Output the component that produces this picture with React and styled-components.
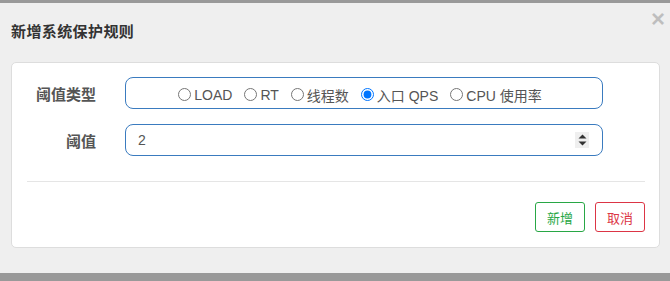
import styled, { createGlobalStyle } from "styled-components";
import { useState } from "react";

const GlobalStyle = createGlobalStyle`
  html, body {
    margin: 0;
    padding: 0;
    background: #999;
  }
  body {
    font-family: "Liberation Sans", "Noto Sans CJK SC", sans-serif;
  }
`;

const options = ["LOAD", "RT", "线程数", "入口 QPS", "CPU 使用率"];

export default function App() {
  const [mode, setMode] = useState("入口 QPS");
  const [count, setCount] = useState("2");

  return (
    <>
      <GlobalStyle />
      <Page>
        <Dialog>
          <Header>
            <Title>新增系统保护规则</Title>
            <Close>×</Close>
          </Header>
          <Card>
            <Row>
              <Label>阈值类型</Label>
              <RadioBox>
                {options.map((opt) => (
                  <RadioLabel key={opt}>
                    <Radio
                      type="radio"
                      name="mode"
                      checked={mode === opt}
                      onChange={() => setMode(opt)}
                    />
                    {opt}
                  </RadioLabel>
                ))}
              </RadioBox>
            </Row>
            <Row>
              <Label>阈值</Label>
              <NumberBox>
                <NumberInput
                  value={count}
                  onChange={(evt) => setCount(evt.target.value)}
                />
                <Spinner>
                  <svg width="9" height="12" viewBox="0 0 9 12">
                    <path d="M4.5 0.5 L8.5 4.5 L0.5 4.5 Z" fill="#333" />
                    <path d="M0.5 7.5 L8.5 7.5 L4.5 11.5 Z" fill="#333" />
                  </svg>
                </Spinner>
              </NumberBox>
            </Row>
            <Divider />
            <Footer>
              <Button $color="#28a745">新增</Button>
              <Button $color="#dc3545">取消</Button>
            </Footer>
          </Card>
        </Dialog>
      </Page>
    </>
  );
}

const Page = styled.div`
  width: 670px;
  height: 281px;
  padding: 3px 0 8px;
  box-sizing: border-box;
  background: #999;
`;

const Dialog = styled.div`
  position: relative;
  height: 270px;
  background: #efefef;
  padding: 0 10px 0 11px;
  box-sizing: border-box;
`;

const Header = styled.div`
  height: 59px;
  padding-top: 18px;
  box-sizing: border-box;
`;

const Title = styled.div`
  font-family: "Noto Sans CJK SC", sans-serif;
  font-size: 15px;
  font-weight: bold;
  letter-spacing: 0.4px;
  color: #333;
  line-height: 20px;
`;

const Close = styled.span`
  position: absolute;
  top: 4px;
  right: 5px;
  font-family: "Liberation Sans", sans-serif;
  font-size: 24px;
  font-weight: bold;
  line-height: 1;
  color: #000;
  opacity: 0.2;
`;

const Card = styled.div`
  background: #fff;
  border: 1px solid #ddd;
  border-radius: 5px;
  height: 186px;
  box-sizing: border-box;
  padding: 14px 14px 0 15px;
  display: flex;
  flex-direction: column;
  gap: 15px;
`;

const Row = styled.div`
  display: flex;
  align-items: center;
`;

const Label = styled.div`
  width: 69px;
  margin-right: 29px;
  text-align: right;
  font-family: "Noto Sans CJK SC", sans-serif;
  font-size: 15px;
  font-weight: bold;
  color: #555;
`;

const Field = styled.div`
  width: 478px;
  height: 32px;
  box-sizing: border-box;
  border: 1px solid #3a7bbf;
  border-radius: 8px;
  display: flex;
  align-items: center;
`;

const RadioBox = styled(Field)`
  justify-content: center;
  gap: 12px;
  padding: 3px 8px 0 0;
`;

const RadioLabel = styled.label`
  display: flex;
  align-items: center;
  font-size: 14px;
  color: #555;
`;

const Radio = styled.input`
  width: 13px;
  height: 13px;
  margin: 0 3px 0 0;
`;

const NumberBox = styled(Field)`
  padding: 0 13px 0 12px;
`;

const NumberInput = styled.input`
  flex: 1;
  border: none;
  outline: none;
  padding: 0;
  font-family: "Liberation Sans", sans-serif;
  font-size: 14px;
  color: #555;
  background: transparent;
`;

const Spinner = styled.span`
  width: 14px;
  height: 16px;
  background: #efefef;
  display: flex;
  align-items: center;
  justify-content: center;
`;

const Divider = styled.div`
  height: 1px;
  background: #e5e5e5;
  margin: 10px 0 5px;
`;

const Footer = styled.div`
  display: flex;
  justify-content: flex-end;
  gap: 10px;
`;

const Button = styled.button`
  width: 50px;
  height: 30px;
  padding: 0;
  background: #fff;
  border: 1px solid ${(p) => p.$color};
  border-radius: 3px;
  color: ${(p) => p.$color};
  font-family: "Noto Sans CJK SC", sans-serif;
  font-size: 13px;
`;
